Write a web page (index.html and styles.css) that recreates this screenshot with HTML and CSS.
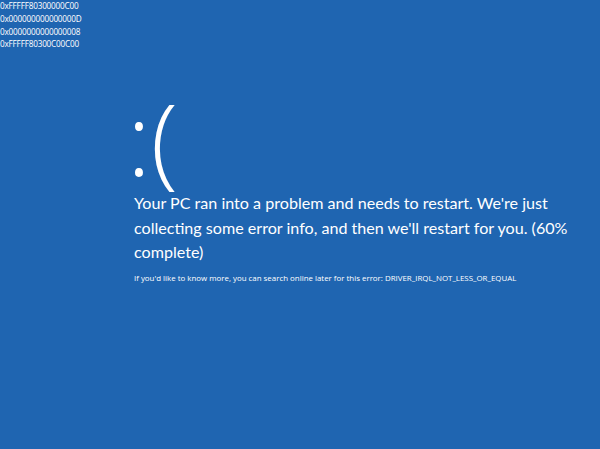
FILE: index.html
```html
<!DOCTYPE html>
<html>
<head>
<meta charset="utf-8">
<link rel="stylesheet" href="styles.css">
</head>
<body>
<div class="codes">
<div>0xFFFFF80300000C00</div>
<div>0x000000000000000D</div>
<div>0x0000000000000008</div>
<div>0xFFFFF80300C00C00</div>
</div>
<main class="content">
<div class="face">:(</div>
<p class="message">Your PC ran into a problem and needs to restart. We're just collecting some error info, and then we'll restart for you. (60% complete)</p>
<p class="detail">If you'd like to know more, you can search online later for this error: DRIVER_IRQL_NOT_LESS_OR_EQUAL</p>
</main>
</body>
</html>
```
FILE: styles.css
```css
html, body {
  margin: 0;
  padding: 0;
  height: 100%;
}
body {
  background: #1f65b1;
  color: #ffffff;
  font-family: "Lato", "Open Sans", sans-serif;
  overflow: hidden;
}
.codes {
  font-family: "Open Sans", sans-serif;
  font-size: 8.2px;
  line-height: 12.8px;
  letter-spacing: -0.2px;
}
.content {
  padding-left: 134px;
  padding-top: 41px;
  width: 442px;
}
.face {
  font-family: "Open Sans", sans-serif;
  font-size: 100px;
  line-height: 90px;
  font-weight: 300;
  margin-left: -7px;
}
.message {
  margin: 9px 0 0 0;
  font-size: 16.1px;
  line-height: 24.5px;
  font-weight: 400;
}
.detail {
  margin: 7px 0 0 0;
  font-size: 7.9px;
  line-height: 12px;
  white-space: nowrap;
  font-family: "Open Sans", sans-serif;
}
```
